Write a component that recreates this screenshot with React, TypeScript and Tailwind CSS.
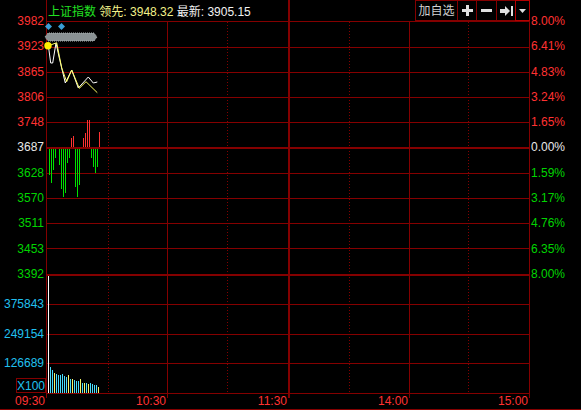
import React from "react";

const leftPrices: [string, string][] = [
  ["3982", "text-[#ff3232]"],
  ["3923", "text-[#ff3232]"],
  ["3865", "text-[#ff3232]"],
  ["3806", "text-[#ff3232]"],
  ["3748", "text-[#ff3232]"],
  ["3687", "text-[#e8e8e8]"],
  ["3628", "text-[#00d400]"],
  ["3570", "text-[#00d400]"],
  ["3511", "text-[#00d400]"],
  ["3453", "text-[#00d400]"],
  ["3392", "text-[#00d400]"],
];

const rightPct: [string, string][] = [
  ["8.00%", "text-[#ff3232]"],
  ["6.41%", "text-[#ff3232]"],
  ["4.83%", "text-[#ff3232]"],
  ["3.24%", "text-[#ff3232]"],
  ["1.65%", "text-[#ff3232]"],
  ["0.00%", "text-[#e8e8e8]"],
  ["1.59%", "text-[#00d400]"],
  ["3.17%", "text-[#00d400]"],
  ["4.76%", "text-[#00d400]"],
  ["6.35%", "text-[#00d400]"],
  ["8.00%", "text-[#00d400]"],
];

const volLabels = ["375843", "249154", "126689"];

// chart data in page coords (the svg group is shifted back by 46,21)
const redBars: [number, number][] = [
  [71, 138], [73, 136], [83, 138], [85, 133], [87, 120], [89, 120], [99, 132],
];
const greenBars: [number, number][] = [
  [49, 175], [51, 183], [53, 170], [55, 158], [59, 165], [61, 189], [63, 197],
  [65, 193], [67, 163], [69, 158], [75, 187], [77, 197], [79, 185], [91, 158],
  [93, 167], [95, 173], [97, 167],
];
const volBars: [number, number, boolean][] = [
  [50, 367, false], [52, 370, false], [54, 373, true], [56, 374, false],
  [58, 375, false], [60, 375, false], [62, 374, false], [64, 376, false],
  [66, 377, false], [68, 375, true], [70, 379, false], [72, 379, true],
  [74, 380, false], [76, 381, false], [78, 381, false], [80, 379, true],
  [82, 383, false], [84, 383, true], [86, 383, false], [88, 384, true],
  [90, 383, false], [92, 384, false], [94, 385, false], [96, 385, false],
  [98, 387, true],
];

const whiteLine = "48,43 50.7,63 52.7,63 56,43 59.3,58 65.3,83 71.7,70 78.3,88 88.3,77 93.3,83 97.3,82";
const yellowLine = "48,46 56.7,42.7 61.7,68 66.7,81.7 71.7,70 79.3,88.3 86,81.7 97.3,92.7";

const GRID = "#840000";

function Chart() {
  const thin = [21, 47, 72, 97, 122, 173, 198, 223, 248, 304, 334, 363, 393];
  const thick = [147, 274];
  const solid = [46, 167, 409, 529];
  const dotted = [108, 227, 349, 468];
  return (
    <svg width={484} height={373} className="block overflow-visible">
      <g transform="translate(-46,-21)">
        <g shapeRendering="crispEdges" fill={GRID}>
          {thin.map((y) => (
            <rect key={y} x={46} y={y} width={484} height={1} />
          ))}
          {thick.map((y) => (
            <rect key={y} x={46} y={y} width={484} height={2} />
          ))}
          {solid.map((x) => (
            <rect key={x} x={x} y={21} width={1} height={373} />
          ))}
          <rect x={288} y={21} width={2} height={373} />
          {dotted.map((x) => (
            <line
              key={x}
              x1={x + 0.5}
              y1={22}
              x2={x + 0.5}
              y2={393}
              stroke={GRID}
              strokeWidth={1}
              strokeDasharray="1 2"
            />
          ))}
        </g>

        <g shapeRendering="crispEdges">
          {redBars.map(([x, top]) => (
            <rect key={"r" + x} x={x} y={top} width={1} height={147 - top} fill="#ff3232" />
          ))}
          {greenBars.map(([x, bottom]) => (
            <rect key={"g" + x} x={x} y={149} width={1} height={bottom - 149} fill="#00e000" />
          ))}
          <rect x={48} y={276} width={1} height={117} fill="#ffffff" />
          {volBars.map(([x, top, up]) => (
            <rect
              key={"v" + x}
              x={x}
              y={top}
              width={1}
              height={393 - top}
              fill={up ? "#f4f46a" : "#48dcfa"}
            />
          ))}
        </g>

        <polygon
          points="45,37 48,33 94,33 97,37 94,41 48,41"
          fill="#8a9294"
          stroke="#a9b1b1"
          strokeWidth={1}
          strokeDasharray="1 1"
        />
        <polygon points="48.5,23 52,26.5 48.5,30 45,26.5" fill="#3a9fd6" />
        <polygon points="61.5,23 65,26.5 61.5,30 58,26.5" fill="#3a9fd6" />

        <polyline points={whiteLine} fill="none" stroke="#ffffff" strokeWidth={1} />
        <polyline points={yellowLine} fill="none" stroke="#ffff66" strokeWidth={1} />
        <circle cx={48} cy={45.8} r={3.7} fill="#ffee00" />
      </g>
    </svg>
  );
}

function Header() {
  return (
    <div className="flex h-[21px]">
      <div className="flex w-[242px] items-center whitespace-pre border-l border-[#840000] pl-[1px] pt-[2px] leading-[12px]">
        <span className="text-[#22e022]">上证指数</span>
        <span> </span>
        <span className="text-[#f2f28a]">领先: 3948.32</span>
        <span> </span>
        <span className="text-[#f2f2f2]">最新: 3905.15</span>
      </div>
      <div className="flex flex-1 justify-end border-l-2 border-[#840000]">
        <div className="flex w-[42px] items-center justify-center border-y border-l border-[#840000] pt-[1px] leading-[12px] text-[#d2d2d2]">
          加自选
        </div>
        <div className="flex w-[19px] items-center justify-center border-y border-l border-[#840000]">
          <svg width={11} height={11} className="block" shapeRendering="crispEdges">
            <rect x={0} y={4} width={11} height={3} fill="#e0e0e0" />
            <rect x={4} y={0} width={3} height={11} fill="#e0e0e0" />
          </svg>
        </div>
        <div className="flex w-[20px] items-center justify-center border-y border-l border-[#840000]">
          <svg width={11} height={3} className="block" shapeRendering="crispEdges">
            <rect x={0} y={0} width={11} height={3} fill="#e0e0e0" />
          </svg>
        </div>
        <div className="flex w-[19px] items-center justify-center border-y border-l border-[#840000]">
          <svg width={13} height={10} className="block">
            <rect x={0} y={3} width={5} height={4} fill="#e0e0e0" />
            <polygon points="5,0 10,5 5,10" fill="#e0e0e0" />
            <rect x={11} y={0} width={2} height={10} fill="#e0e0e0" />
          </svg>
        </div>
        <div className="flex w-[15px] items-center justify-center border border-[#b40000]">
          <svg width={7} height={4} className="block">
            <polygon points="0,0 7,0 3.5,4" fill="#e0e0e0" />
          </svg>
        </div>
      </div>
    </div>
  );
}

function LeftAxis() {
  return (
    <div className="flex w-[46px] flex-col pt-[8.35px] leading-[12px]">
      {leftPrices.map(([v, c]) => (
        <div key={v} className={`flex h-[25.3px] items-center justify-end pr-[2px] ${c}`}>
          {v}
        </div>
      ))}
      <div className="h-[2.5px]" />
      {volLabels.map((v) => (
        <div key={v} className="flex h-[29.75px] items-center justify-end pr-[2px] text-[#20c0f0]">
          {v}
        </div>
      ))}
      <div className="flex h-[15px] w-[30px] items-center justify-center self-end border border-[#840000] text-[#20c0f0]">
        X100
      </div>
    </div>
  );
}

function RightAxis() {
  return (
    <div className="flex w-[51px] flex-col pt-[8.35px] pl-[1px] leading-[12px]">
      {rightPct.map(([v, c], i) => (
        <div key={i} className={`flex h-[25.3px] items-center ${c}`}>
          {v}
        </div>
      ))}
    </div>
  );
}

function TimeAxis() {
  const segs: [string, string, string][] = [
    ["09:30", "w-[47px]", "w-px"],
    ["10:30", "w-[121px]", "w-px"],
    ["11:30", "w-[122px]", "w-[2px]"],
    ["14:00", "w-[120px]", "w-px"],
    ["15:00", "w-[120px]", "w-px"],
  ];
  return (
    <div className="flex h-[15px]">
      {segs.map(([t, w, tw]) => (
        <div key={t} className={`flex ${w} items-start justify-end`}>
          <span className="pt-[1px] pr-[1px] leading-[12px] text-[#ff3232]">{t}</span>
          <div className={`h-[4px] ${tw} bg-[#840000]`} />
        </div>
      ))}
    </div>
  );
}

export default function App() {
  return (
    <div className="h-[410px] w-[581px] overflow-hidden bg-black font-[family-name:Liberation_Sans,Noto_Sans_CJK_SC,sans-serif] text-[12px]">
      <div className="flex">
        <LeftAxis />
        <div className="w-[484px]">
          <Header />
          <Chart />
        </div>
        <RightAxis />
      </div>
      <TimeAxis />
      <div className="h-px bg-[#840000]" />
    </div>
  );
}
